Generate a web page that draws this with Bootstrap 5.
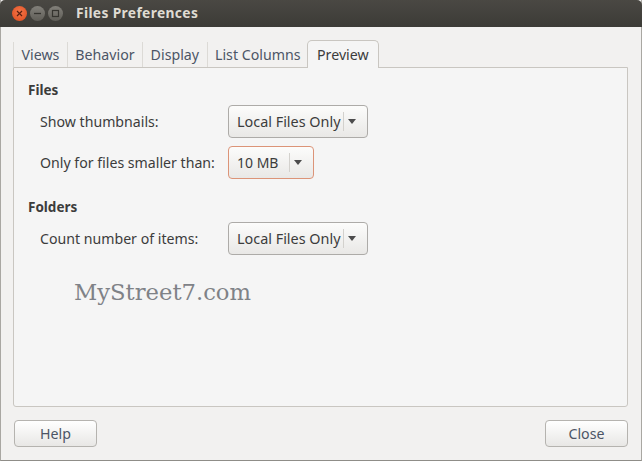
<!DOCTYPE html>
<html lang="en">
<head>
<meta charset="utf-8">
<title>Files Preferences</title>
<link rel="stylesheet" href="https://cdn.jsdelivr.net/npm/bootstrap@5.3.0/dist/css/bootstrap.min.css">
<style>
html,body{height:461px;overflow:hidden;background:#f2f1f0}
body{font-family:"Noto Sans","Open Sans",sans-serif;font-size:14px;color:#3c3c3c}
.win{width:642px;height:461px;background:#f2f1f0;border-left:1px solid #a9a7a2;border-right:1px solid #a9a7a2;border-bottom:1px solid #8f8d88}
.titlebar{height:27px;margin:0 -1px;padding-left:12px;background:linear-gradient(#4a4843,#3c3b37);border-radius:5px 5px 0 0;color:#dfdbd2;font-weight:700;font-size:13.8px;letter-spacing:.35px}
.wbtn{width:15px;height:15px;border-radius:50%;display:flex;align-items:center;justify-content:center}
.wclose{background:radial-gradient(circle at 50% 40%,#f4764a,#dc4a1c)}
.wgrey{background:linear-gradient(#82807a,#5f5d57)}
.wbtns{gap:3px}
.wtitle{margin-left:13px}
.body-pad{padding:14px 12px 0 12px}
.tabrow{height:26px;padding-left:0;position:relative;z-index:1}
.tabitem{height:25px;margin-top:1px;padding:0 7.5px;line-height:25px;color:#4c5566;border-right:1px solid #dcdad6;white-space:nowrap;font-size:14.2px}
.tabitem.first{border-left:1px solid #dcdad6}
.tabitem.none{border-right:0}
.tabitem.active{background:#f5f5f5;border:1px solid #c9c6c1;border-bottom:0;border-radius:5px 5px 0 0;height:28px;margin-top:-1px;padding:0 9px;margin-left:-1px;color:#3c3c3c;line-height:27px}
.pane{width:615px;height:340px;background:#f5f5f5;border:1px solid #c9c6c1;border-radius:0 0 3px 3px;padding:12px 14px}
.heading{font-weight:700;font-size:13.5px;line-height:20px;color:#3c3c3c}
.grouprow{height:33px;padding-left:12px;margin-top:5px}
.grouprow.tight{margin-top:8px}
.lbl{width:188px;white-space:nowrap;font-size:14.15px}
.combo{height:33px;width:140px;background:linear-gradient(#fcfcfb,#e9e8e6);border:1px solid #adaba8;border-radius:4px;font-size:14.4px;color:#3c3c3c;padding:0}
.combo.focus{width:86px;border-color:#dc9478}
.combotext{flex:1;padding-left:8px;white-space:nowrap;text-align:left}
.combo.focus .combotext{font-size:14px}
.combosep{width:1px;height:19px;background:#d3d1cd}
.comboarrow{width:23px;padding-left:4px;display:flex}
.tri{width:0;height:0;border-left:4.5px solid transparent;border-right:4.5px solid transparent;border-top:5px solid #4c4c4c}
.secondhead{margin-top:18px}
.mark7{font-family:"DejaVu Serif","Liberation Serif",serif;font-size:22.7px;color:#7f8287;line-height:30px;margin:22px 0 0 46px}
.foot{padding:13px 0 0 13px;width:627px}
.actionbtn{width:83px;height:27px;padding:0;background:linear-gradient(#ffffff,#e8e7e5);border:1px solid #b5b3af;border-radius:4px;font-size:14.2px;color:#4c5566;line-height:24px}
</style>
</head>
<body>
<div class="win">
  <div class="titlebar d-flex align-items-center">
    <div class="wbtns d-flex">
      <span class="wbtn wclose"><svg width="9" height="9" viewBox="0 0 9 9"><path d="M2 2l5 5M7 2l-5 5" stroke="#5a2010" stroke-width="1.2" fill="none"/></svg></span>
      <span class="wbtn wgrey"><svg width="9" height="9" viewBox="0 0 9 9"><path d="M1 4.5h7" stroke="#35342f" stroke-width="1.3" fill="none"/></svg></span>
      <span class="wbtn wgrey"><svg width="9" height="9" viewBox="0 0 9 9"><rect x="1.5" y="1.5" width="6" height="6" stroke="#35342f" stroke-width="1.2" fill="none"/></svg></span>
    </div>
    <span class="wtitle">Files Preferences</span>
  </div>
  <div class="body-pad">
    <div class="tabrow d-flex">
      <span class="tabitem first">Views</span>
      <span class="tabitem">Behavior</span>
      <span class="tabitem">Display</span>
      <span class="tabitem none">List Columns</span>
      <span class="tabitem active">Preview</span>
    </div>
    <div class="pane">
      <div class="heading">Files</div>
      <div class="grouprow d-flex align-items-center">
        <span class="lbl">Show thumbnails:</span>
        <div class="combo d-flex align-items-center"><span class="combotext">Local Files Only</span><span class="combosep"></span><span class="comboarrow"><span class="tri"></span></span></div>
      </div>
      <div class="grouprow tight d-flex align-items-center">
        <span class="lbl">Only for files smaller than:</span>
        <div class="combo focus d-flex align-items-center"><span class="combotext">10 MB</span><span class="combosep"></span><span class="comboarrow"><span class="tri"></span></span></div>
      </div>
      <div class="heading secondhead">Folders</div>
      <div class="grouprow d-flex align-items-center">
        <span class="lbl">Count number of items:</span>
        <div class="combo d-flex align-items-center"><span class="combotext">Local Files Only</span><span class="combosep"></span><span class="comboarrow"><span class="tri"></span></span></div>
      </div>
      <div class="mark7">MyStreet7.com</div>
    </div>
    </div>
  <div class="foot d-flex justify-content-between">
    <button type="button" class="btn actionbtn">Help</button>
    <button type="button" class="btn actionbtn">Close</button>
  </div>
</div>
<script src="https://cdn.jsdelivr.net/npm/bootstrap@5.3.0/dist/js/bootstrap.bundle.min.js"></script>
</body>
</html>
